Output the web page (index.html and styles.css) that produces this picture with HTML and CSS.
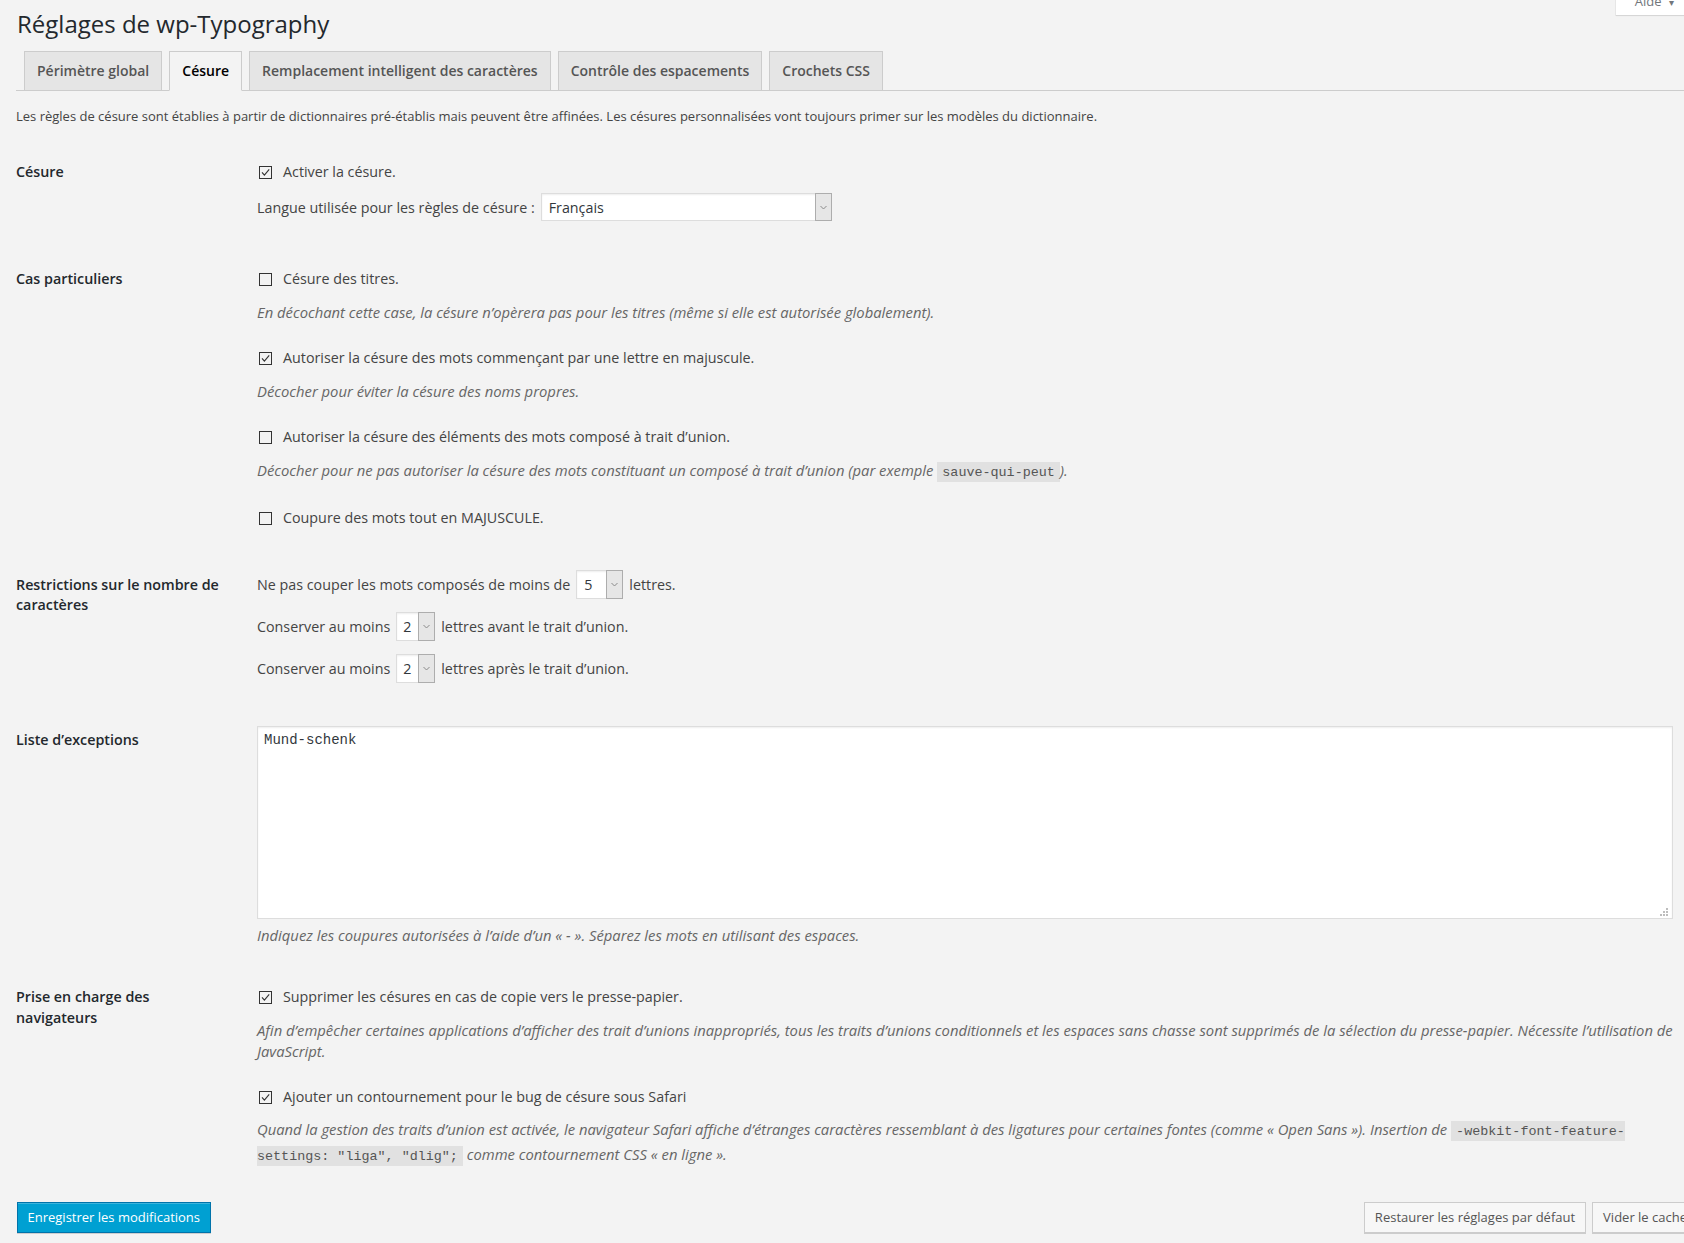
FILE: index.html
```html
<!DOCTYPE html>
<html lang="fr">
<head>
<meta charset="utf-8">
<title>Réglages de wp-Typography</title>
<link rel="stylesheet" href="styles.css">
</head>
<body>
<div class="help-tab">Aide <span class="help-arrow">▾</span></div>
<div class="wrap">
  <h1 class="page-title">Réglages de wp-Typography</h1>
  <nav class="tabs">
    <a class="tab">Périmètre global</a>
    <a class="tab tab-active">Césure</a>
    <a class="tab">Remplacement intelligent des caractères</a>
    <a class="tab">Contrôle des espacements</a>
    <a class="tab">Crochets CSS</a>
  </nav>
  <p class="intro">Les règles de césure sont établies à partir de dictionnaires pré-établis mais peuvent être affinées. Les césures personnalisées vont toujours primer sur les modèles du dictionnaire.</p>

  <div class="form-table">
    <div class="row">
      <div class="th">Césure</div>
      <div class="td">
        <label class="opt"><svg class="cb" width="13" height="13" viewBox="0 0 13 13"><rect x="0.5" y="0.5" width="12" height="12" fill="none" stroke="#333"/><path d="M3 6.3 L5.4 9.2 L10.2 3.4" fill="none" stroke="#333" stroke-width="1.1"/></svg>Activer la césure.</label>
        <div class="inline-line lang-line">
          <span>Langue utilisée pour les règles de césure :</span>
          <div class="select select-lang"><span class="sel-value">Français</span><span class="sel-arrow"><svg width="7" height="5" viewBox="0 0 7 5"><path d="M0.5 1 L3.5 4 L6.5 1" fill="none" stroke="#8a8a8a" stroke-width="1"/></svg></span></div>
        </div>
      </div>
    </div>

    <div class="row">
      <div class="th">Cas particuliers</div>
      <div class="td">
        <label class="opt"><svg class="cb" width="13" height="13" viewBox="0 0 13 13"><rect x="0.5" y="0.5" width="12" height="12" fill="none" stroke="#333"/></svg>Césure des titres.</label>
        <p class="desc">En décochant cette case, la césure n’opèrera pas pour les titres (même si elle est autorisée globalement).</p>
        <label class="opt opt-next"><svg class="cb" width="13" height="13" viewBox="0 0 13 13"><rect x="0.5" y="0.5" width="12" height="12" fill="none" stroke="#333"/><path d="M3 6.3 L5.4 9.2 L10.2 3.4" fill="none" stroke="#333" stroke-width="1.1"/></svg>Autoriser la césure des mots commençant par une lettre en majuscule.</label>
        <p class="desc">Décocher pour éviter la césure des noms propres.</p>
        <label class="opt opt-next"><svg class="cb" width="13" height="13" viewBox="0 0 13 13"><rect x="0.5" y="0.5" width="12" height="12" fill="none" stroke="#333"/></svg>Autoriser la césure des éléments des mots composé à trait d’union.</label>
        <p class="desc">Décocher pour ne pas autoriser la césure des mots constituant un composé à trait d’union (par exemple <code class="code">sauve-qui-peut</code>).</p>
        <label class="opt opt-next"><svg class="cb" width="13" height="13" viewBox="0 0 13 13"><rect x="0.5" y="0.5" width="12" height="12" fill="none" stroke="#333"/></svg>Coupure des mots tout en MAJUSCULE.</label>
      </div>
    </div>

    <div class="row">
      <div class="th">Restrictions sur le nombre de caractères</div>
      <div class="td">
        <div class="inline-line num-line">
          <span>Ne pas couper les mots composés de moins de</span>
          <div class="select select-num-wide"><span class="sel-value">5</span><span class="sel-arrow"><svg width="7" height="5" viewBox="0 0 7 5"><path d="M0.5 1 L3.5 4 L6.5 1" fill="none" stroke="#8a8a8a" stroke-width="1"/></svg></span></div>
          <span>lettres.</span>
        </div>
        <div class="inline-line num-line num-next">
          <span>Conserver au moins</span>
          <div class="select select-num"><span class="sel-value">2</span><span class="sel-arrow"><svg width="7" height="5" viewBox="0 0 7 5"><path d="M0.5 1 L3.5 4 L6.5 1" fill="none" stroke="#8a8a8a" stroke-width="1"/></svg></span></div>
          <span>lettres avant le trait d’union.</span>
        </div>
        <div class="inline-line num-line num-next">
          <span>Conserver au moins</span>
          <div class="select select-num"><span class="sel-value">2</span><span class="sel-arrow"><svg width="7" height="5" viewBox="0 0 7 5"><path d="M0.5 1 L3.5 4 L6.5 1" fill="none" stroke="#8a8a8a" stroke-width="1"/></svg></span></div>
          <span>lettres après le trait d’union.</span>
        </div>
      </div>
    </div>

    <div class="row row-area">
      <div class="th th-area">Liste d’exceptions</div>
      <div class="td">
        <div class="area-wrap">
          <textarea class="area" readonly>Mund-schenk</textarea>
          <svg class="grip" width="9" height="9" viewBox="0 0 9 9"><g fill="#bdbdbd"><rect x="6" y="0" width="2" height="2"/><rect x="3" y="3" width="2" height="2"/><rect x="6" y="3" width="2" height="2"/><rect x="0" y="6" width="2" height="2"/><rect x="3" y="6" width="2" height="2"/><rect x="6" y="6" width="2" height="2"/></g></svg>
        </div>
        <p class="desc desc-area">Indiquez les coupures autorisées à l’aide d’un « - ». Séparez les mots en utilisant des espaces.</p>
      </div>
    </div>

    <div class="row">
      <div class="th">Prise en charge des navigateurs</div>
      <div class="td">
        <label class="opt"><svg class="cb" width="13" height="13" viewBox="0 0 13 13"><rect x="0.5" y="0.5" width="12" height="12" fill="none" stroke="#333"/><path d="M3 6.3 L5.4 9.2 L10.2 3.4" fill="none" stroke="#333" stroke-width="1.1"/></svg>Supprimer les césures en cas de copie vers le presse-papier.</label>
        <p class="desc">Afin d’empêcher certaines applications d’afficher des trait d’unions inappropriés, tous les traits d’unions conditionnels et les espaces sans chasse sont supprimés de la sélection du presse-papier. Nécessite l’utilisation de JavaScript.</p>
        <label class="opt opt-next"><svg class="cb" width="13" height="13" viewBox="0 0 13 13"><rect x="0.5" y="0.5" width="12" height="12" fill="none" stroke="#333"/><path d="M3 6.3 L5.4 9.2 L10.2 3.4" fill="none" stroke="#333" stroke-width="1.1"/></svg>Ajouter un contournement pour le bug de césure sous Safari</label>
        <p class="desc desc-code">Quand la gestion des traits d’union est activée, le navigateur Safari affiche d’étranges caractères ressemblant à des ligatures pour certaines fontes (comme « Open Sans »). Insertion de <code class="code">-webkit-font-feature-settings: "liga", "dlig";</code> comme contournement CSS « en ligne ».</p>
      </div>
    </div>
  </div>

  <div class="actions">
    <button class="btn btn-primary" type="button">Enregistrer les modifications</button>
    <div class="btn-group">
      <button class="btn" type="button">Restaurer les réglages par défaut</button>
      <button class="btn" type="button">Vider le cache</button>
    </div>
  </div>
</div>
</body>
</html>
```

FILE: styles.css
```css
* { box-sizing: border-box; }

html, body { margin: 0; }

body {
  background: #f3f3f3;
  font-family: "Open Sans", "Noto Sans", sans-serif;
  font-size: 14.3px;
  color: #444;
  overflow-x: hidden;
  min-height: 1243px;
}

.help-tab {
  position: absolute;
  top: -13px;
  right: -12px;
  height: 28px;
  padding: 0 22px 0 19px;
  line-height: 28px;
  font-size: 13px;
  color: #72777c;
  background: #fff;
  box-shadow: 0 1px 1px rgba(0,0,0,.08), 0 0 0 1px rgba(0,0,0,.04);
}

.help-arrow { font-size: 10px; margin-left: 4px; }

.wrap { padding-left: 16px; }

.page-title {
  margin: 9px 0 0 1px;
  font-size: 24px;
  font-weight: 400;
  line-height: 29px;
  color: #23282d;
}

.tabs {
  display: flex;
  margin-top: 13px;
  padding-left: 8px;
  border-bottom: 1px solid #ccc;
}

.tab {
  margin-right: 7px;
  padding: 7px 12px;
  border: 1px solid #ccc;
  border-bottom: none;
  background: #e5e5e5;
  color: #555;
  font-weight: 600;
  font-size: 14px;
  line-height: 24px;
}

.tab-active {
  background: #f3f3f3;
  color: #000;
  margin-bottom: -1px;
  border-bottom: 1px solid #f3f3f3;
}

.intro {
  margin: 15px 0 0;
  font-size: 13px;
  line-height: 20px;
  color: #444;
}

.form-table { margin-top: 15px; }

.row {
  display: grid;
  grid-template-columns: 241px 1fr;
  align-items: baseline;
  padding: 20px 0;
}

.th {
  font-weight: 600;
  color: #23282d;
  line-height: 20.5px;
  padding-right: 31px;
}

.td { min-width: 0; }

.opt {
  display: block;
  line-height: 22px;
  color: #444;
}

.opt-next { margin-top: 24px; }

.cb {
  display: inline-block;
  vertical-align: -2px;
  margin: 0 11px 0 2px;
}

.desc {
  margin: 12px 0 0;
  font-size: 14.8px;
  font-style: italic;
  color: #666;
  line-height: 21px;
}

.desc-code {
  margin-top: 10px;
  line-height: 22px;
}

.code {
  font-family: "Liberation Mono", "DejaVu Sans Mono", monospace;
  font-style: normal;
  font-size: 13.4px;
  color: #555;
  background: rgba(0,0,0,.07);
  padding: 3px 5px 2px;
}

.inline-line {
  display: flex;
  align-items: center;
  gap: 6px;
}

.lang-line {
  margin: 10px 0 7px;
  height: 28px;
}

.num-line { height: 30px; }
.num-next { margin-top: 12px; }

.select {
  display: flex;
  height: 29px;
  border: 1px solid #ddd;
  background: #fff;
  box-shadow: inset 0 1px 2px rgba(0,0,0,.07);
  color: #32373c;
}

.select-lang { width: 291px; height: 28px; }
.select-num-wide { width: 47px; }
.select-num { width: 39px; }

.sel-value {
  flex: 1;
  padding-left: 7px;
  line-height: 27px;
}

.select-num .sel-value { padding-left: 6px; }

.sel-arrow {
  width: 17px;
  margin: -1px -1px -1px 0;
  border: 1px solid #adadad;
  background: #e6e6e6;
  display: flex;
  align-items: center;
  justify-content: center;
}

.row-area { align-items: start; }
.th-area { padding-top: 7px; }

.area-wrap {
  position: relative;
  margin-top: 3px;
  width: calc(100% - 11px);
}

.area {
  display: block;
  width: 100%;
  height: 193px;
  padding: 3px 6px;
  border: 1px solid #ddd;
  background: #fff;
  box-shadow: inset 0 1px 2px rgba(0,0,0,.07);
  font-family: "Liberation Mono", "DejaVu Sans Mono", monospace;
  font-size: 14px;
  line-height: 20px;
  color: #32373c;
  resize: none;
  outline: none;
}

.grip {
  position: absolute;
  right: 4px;
  bottom: 2px;
}

.desc-area { margin-top: 6px; }

.actions {
  display: flex;
  justify-content: space-between;
  margin: 14px -14px 0 1px;
  padding-bottom: 11px;
}

.btn-group { display: flex; gap: 6px; }

.btn {
  height: 31px;
  padding: 0 10px;
  border: 1px solid #ccc;
  border-radius: 0;
  background: #f7f7f7;
  box-shadow: 0 1px 0 #ccc;
  font-family: "Open Sans", "Noto Sans", sans-serif;
  font-size: 13px;
  color: #555;
  line-height: 29px;
  cursor: pointer;
}

.btn-primary {
  padding: 0 9.5px;
  background: #00a0d2;
  border-color: #0073aa;
  box-shadow: inset 0 1px 0 rgba(120,200,230,.5), 0 1px 0 rgba(0,0,0,.15);
  color: #fff;
}
```
